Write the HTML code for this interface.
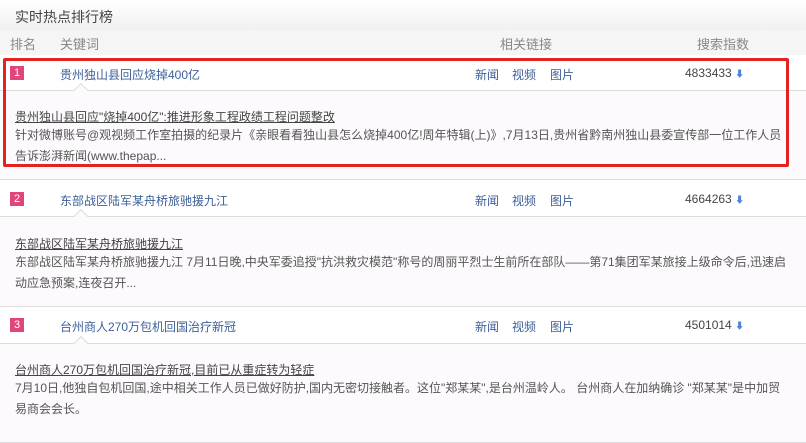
<!DOCTYPE html>
<html><head><meta charset="utf-8"><style>
*{margin:0;padding:0;box-sizing:border-box}
body{width:806px;height:431px;overflow:hidden;background:#fff;font-family:"Liberation Sans","Noto Sans CJK SC",sans-serif;font-size:12px;color:#555;position:relative}
.abs{position:absolute;white-space:nowrap}
.title{left:0;top:0;width:806px;height:30px;background:linear-gradient(#fff,#f0f0f0);}
.title span{position:absolute;left:15px;top:7px;font-size:14px;color:#444}
.hdr{left:0;top:30px;width:806px;height:25px;background:#f5f5f5;color:#888;font-size:13px}
.hdr span{position:absolute;top:4px}
.kw{color:#3d5f99}
.badge{position:absolute;width:14px;height:14px;background:#e0457b;color:#fff;font-size:11px;line-height:14px;text-align:center;left:10px}
.detail{position:absolute;left:0;width:806px;background:#fcfafc;border-top:1px solid #ddd;border-bottom:1px solid #ddd}
.detail .t{position:absolute;left:15px;color:#444;text-decoration:underline}
.detail .d{position:absolute;left:15px;width:775px;line-height:21px;white-space:normal}
.num{color:#444}
.arr{color:#4a85d8;font-size:9px}
.notch{position:absolute;left:76px;top:-6px;width:10px;height:10px;background:#fcfafc;border-left:1px solid #ddd;border-top:1px solid #ddd;transform:rotate(45deg)}
</style></head><body>
<div class="abs title"><span>实时热点排行榜</span></div>
<div class="abs hdr"><span style="left:10px">排名</span><span style="left:60px">关键词</span><span style="left:500px">相关链接</span><span style="left:697px">搜索指数</span></div>

<div class="badge" style="top:66px">1</div>
<div class="abs kw" style="left:60px;top:66px">贵州独山县回应烧掉400亿</div>
<div class="abs kw" style="left:475px;top:66px">新闻</div><div class="abs kw" style="left:512px;top:66px">视频</div><div class="abs kw" style="left:550px;top:66px">图片</div>
<div class="abs num" style="left:685px;top:66px">4833433 <span class="arr">⬇</span></div>
<div class="detail" style="top:90px;height:90px"><div class="notch"></div>
<div class="t" style="top:17px">贵州独山县回应"烧掉400亿":推进形象工程政绩工程问题整改</div>
<div class="d" style="top:34px">针对微博账号@观视频工作室拍摄的纪录片《亲眼看看独山县怎么烧掉400亿!周年特辑(上)》,7月13日,贵州省黔南州独山县委宣传部一位工作人员告诉澎湃新闻(www.thepap...</div></div>
<div class="abs" style="left:3px;top:58px;width:786px;height:109px;border:3px solid #e3231f;border-radius:2px"></div>

<div class="badge" style="top:192px">2</div>
<div class="abs kw" style="left:60px;top:192px">东部战区陆军某舟桥旅驰援九江</div>
<div class="abs kw" style="left:475px;top:192px">新闻</div><div class="abs kw" style="left:512px;top:192px">视频</div><div class="abs kw" style="left:550px;top:192px">图片</div>
<div class="abs num" style="left:685px;top:192px">4664263 <span class="arr">⬇</span></div>
<div class="detail" style="top:216px;height:91px"><div class="notch"></div>
<div class="t" style="top:18px">东部战区陆军某舟桥旅驰援九江</div>
<div class="d" style="top:35px">东部战区陆军某舟桥旅驰援九江 7月11日晚,中央军委追授"抗洪救灾模范"称号的周丽平烈士生前所在部队——第71集团军某旅接上级命令后,迅速启动应急预案,连夜召开...</div></div>

<div class="badge" style="top:318px">3</div>
<div class="abs kw" style="left:60px;top:318px">台州商人270万包机回国治疗新冠</div>
<div class="abs kw" style="left:475px;top:318px">新闻</div><div class="abs kw" style="left:512px;top:318px">视频</div><div class="abs kw" style="left:550px;top:318px">图片</div>
<div class="abs num" style="left:685px;top:318px">4501014 <span class="arr">⬇</span></div>
<div class="detail" style="top:343px;height:100px"><div class="notch"></div>
<div class="t" style="top:17px">台州商人270万包机回国治疗新冠,目前已从重症转为轻症</div>
<div class="d" style="top:34px">7月10日,他独自包机回国,途中相关工作人员已做好防护,国内无密切接触者。这位"郑某某",是台州温岭人。 台州商人在加纳确诊 "郑某某"是中加贸易商会会长。</div></div>
</body></html>
